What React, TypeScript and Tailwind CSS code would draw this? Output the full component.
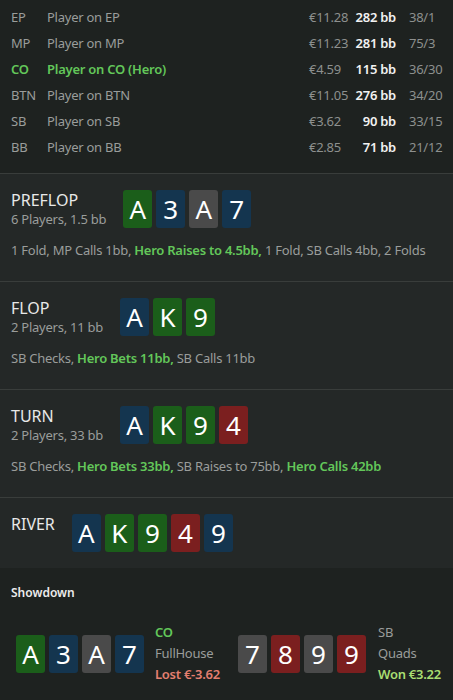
import type { JSX } from "react";

type Suit = "g" | "b" | "x" | "r";

interface Card {
  rank: string;
  suit: Suit;
}

const suitBg: { [key in Suit]: string } = {
  g: "bg-[#1b5e1a]",
  b: "bg-[#14354f]",
  x: "bg-[#4a4a4a]",
  r: "bg-[#7b1f1f]",
};

const players = [
  { pos: "EP", name: "Player on EP", money: "€11.28", bb: "282 bb", stats: "38/1" },
  { pos: "MP", name: "Player on MP", money: "€11.23", bb: "281 bb", stats: "75/3" },
  { pos: "CO", name: "Player on CO (Hero)", money: "€4.59", bb: "115 bb", stats: "36/30", hero: true },
  { pos: "BTN", name: "Player on BTN", money: "€11.05", bb: "276 bb", stats: "34/20" },
  { pos: "SB", name: "Player on SB", money: "€3.62", bb: "90 bb", stats: "33/15" },
  { pos: "BB", name: "Player on BB", money: "€2.85", bb: "71 bb", stats: "21/12" },
];

// action parts: [text, isHero]
type Part = [string, boolean];

interface Street {
  name: string;
  info?: string;
  cards: Card[];
  actions?: Part[];
}

const c = (s: string): Card[] =>
  s.split(" ").map((t) => ({ rank: t[0], suit: t[1] as Suit }));

const streets: Street[] = [
  {
    name: "PREFLOP",
    info: "6 Players, 1.5 bb",
    cards: c("Ag 3b Ax 7b"),
    actions: [
      ["1 Fold, MP Calls 1bb, ", false],
      ["Hero Raises to 4.5bb,", true],
      [" 1 Fold, SB Calls 4bb, 2 Folds", false],
    ],
  },
  {
    name: "FLOP",
    info: "2 Players, 11 bb",
    cards: c("Ab Kg 9g"),
    actions: [
      ["SB Checks, ", false],
      ["Hero Bets 11bb,", true],
      [" SB Calls 11bb", false],
    ],
  },
  {
    name: "TURN",
    info: "2 Players, 33 bb",
    cards: c("Ab Kg 9g 4r"),
    actions: [
      ["SB Checks, ", false],
      ["Hero Bets 33bb,", true],
      [" SB Raises to 75bb, ", false],
      ["Hero Calls 42bb", true],
    ],
  },
  {
    name: "RIVER",
    cards: c("Ab Kg 9g 4r 9b"),
  },
];

function PlayingCard({ card }: { card: Card }): JSX.Element {
  return (
    <div
      className={`w-[29px] h-[38px] rounded-[3px] flex items-center justify-center text-[26px] leading-none tracking-normal text-white ${suitBg[card.suit]}`}
    >
      {card.rank}
    </div>
  );
}

function Cards({ cards }: { cards: Card[] }) {
  return (
    <div className="flex gap-[4px]">
      {cards.map((card, i) => (
        <PlayingCard key={i} card={card} />
      ))}
    </div>
  );
}

export default function App() {
  return (
    <div
      className="w-[453px] min-h-[700px] bg-[#1e2220] text-[13px] tracking-[-0.25px] text-[#9a9d9b]"
      style={{ fontFamily: '"Noto Sans", "Open Sans", sans-serif' }}
    >
      {/* players table */}
      <div className="pt-[5px] pb-[12px] pl-[11px] pr-[12px]">
        {players.map((p) => (
          <div key={p.pos} className="flex items-center h-[26px] whitespace-nowrap">
            <div className={`w-[36px] ${p.hero ? "text-[#63c75a] font-semibold" : ""}`}>{p.pos}</div>
            <div className={`flex-1 ${p.hero ? "text-[#63c75a] font-semibold" : ""}`}>{p.name}</div>
            <div className="w-[45px] text-[#8d908e]">{p.money}</div>
            <div className="w-[42px] text-right text-[#f2f2f2] font-semibold">{p.bb}</div>
            <div className="w-[32px] ml-[13px] text-[#8d908e]">{p.stats}</div>
          </div>
        ))}
      </div>

      {/* streets */}
      {streets.map((s) => (
        <div
          key={s.name}
          className={`bg-[#242827] border-t border-[#393d3b] px-[11px] pt-[16px] ${s.actions ? "pb-[22px]" : "pb-[16px]"}`}
        >
          <div className="flex gap-[17px] h-[38px]">
            <div className="whitespace-nowrap">
              <div className="text-[16px] leading-[21px] tracking-normal text-[#e8e8e8]">{s.name}</div>
              {s.info && <div className="leading-[17px]">{s.info}</div>}
            </div>
            <Cards cards={s.cards} />
          </div>
          {s.actions && (
            <div className="mt-[13px] leading-[18px] whitespace-nowrap">
              {s.actions.map(([t, hero], i) => (
                <span key={i} className={hero ? "text-[#63c75a] font-semibold" : ""}>
                  {t}
                </span>
              ))}
            </div>
          )}
        </div>
      ))}

      {/* showdown */}
      <div className="pt-[16px] pb-[14px]">
        <div className="px-[11px] text-[12px] leading-[18px] font-semibold tracking-normal text-[#ececec]">Showdown</div>
        <div className="grid grid-cols-[222px_1fr] pl-[16px] mt-[20px]">
          <div className="flex items-center gap-[11px]">
            <Cards cards={c("Ag 3b Ax 7b")} />
            <div className="leading-[21px] whitespace-nowrap">
              <div className="text-[#63c75a] font-semibold">CO</div>
              <div>FullHouse</div>
              <div className="text-[#e47f70] font-semibold">Lost €-3.62</div>
            </div>
          </div>
          <div className="flex items-center gap-[12px]">
            <Cards cards={c("7x 8r 9x 9r")} />
            <div className="leading-[21px] whitespace-nowrap">
              <div>SB</div>
              <div>Quads</div>
              <div className="text-[#a9de72] font-semibold">Won €3.22</div>
            </div>
          </div>
        </div>
      </div>
    </div>
  );
}
